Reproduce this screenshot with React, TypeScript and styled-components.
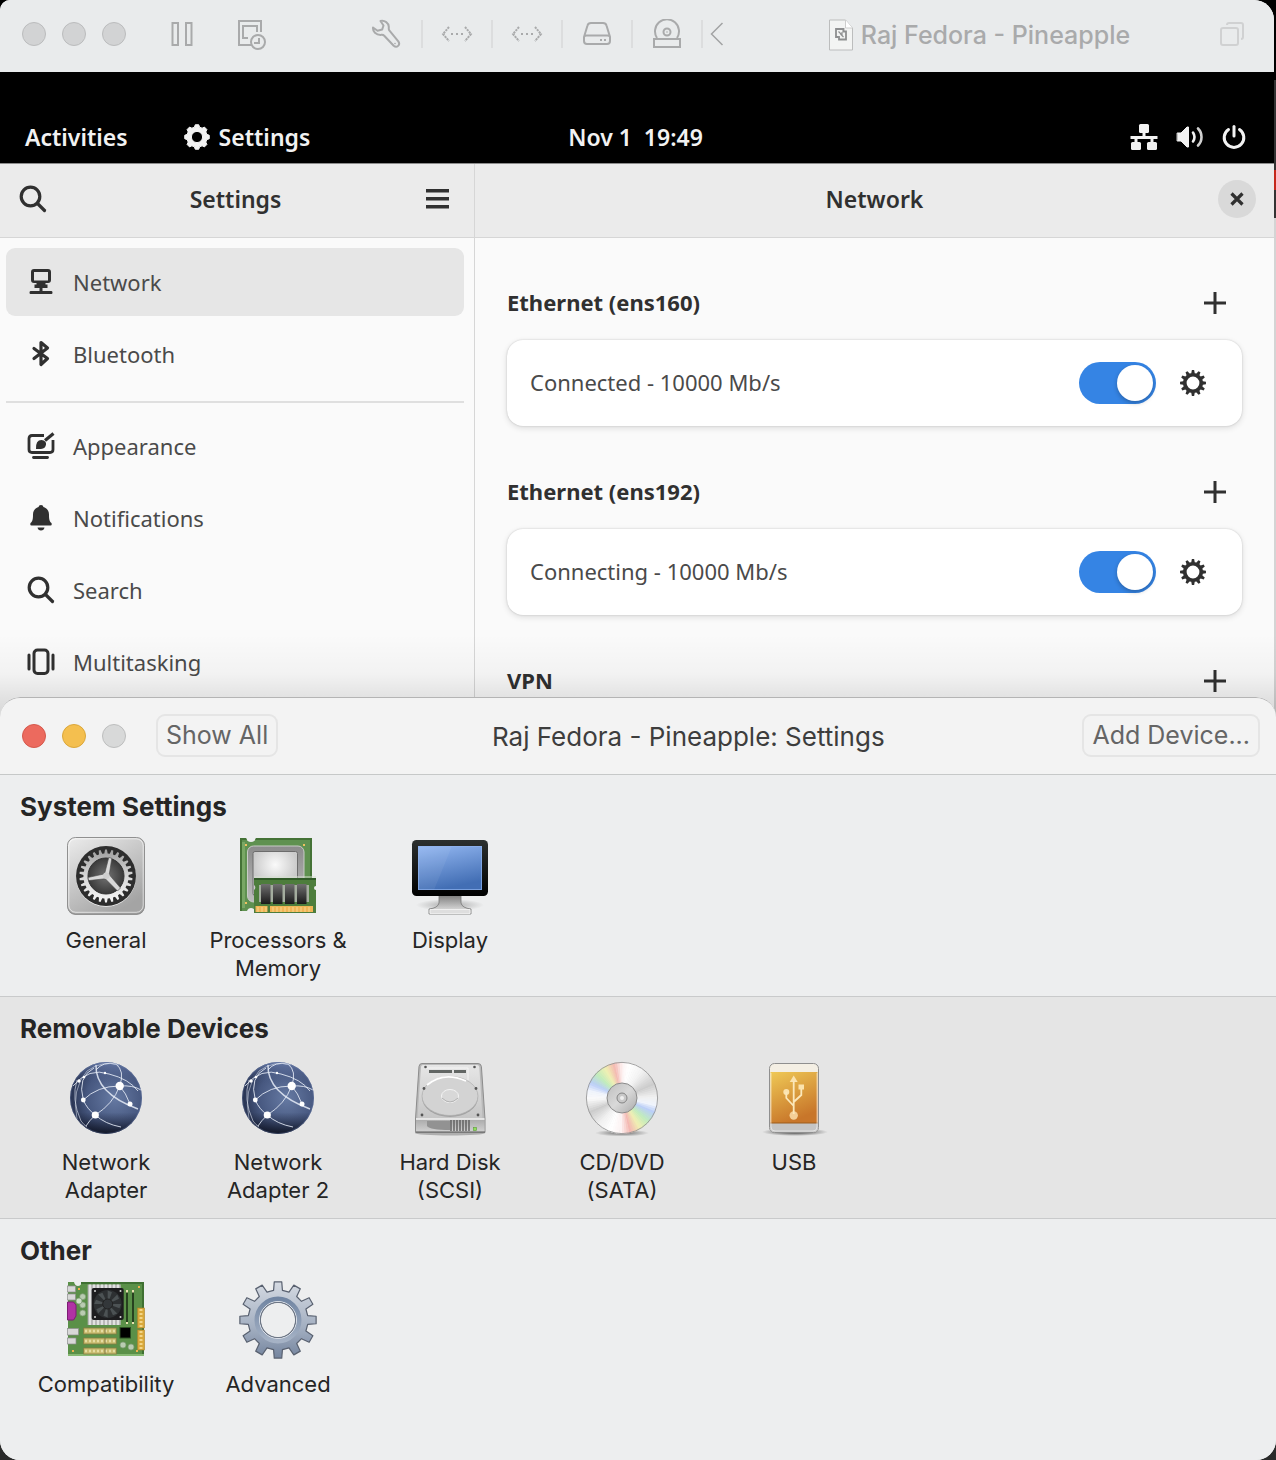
import React, { useState } from "react";
import styled, { createGlobalStyle } from "styled-components";

const GNOME = `"Noto Sans", "Open Sans", sans-serif`;
const MAC = `Inter, "Liberation Sans", sans-serif`;

const GlobalStyle = createGlobalStyle`
  *, *::before, *::after { box-sizing: border-box; }
  body { margin: 0; background: #1c1c1c; }
  button { font: inherit; color: inherit; background: none; border: 0; padding: 0; margin: 0; cursor: pointer; }
  h1, h2, h3 { margin: 0; font-size: inherit; font-weight: inherit; }
  svg { display: block; flex: none; }
`;

/* ---------- geometry helpers ---------- */

const polar = (cx: number, cy: number, r: number, deg: number) => {
  const a = ((deg - 90) * Math.PI) / 180;
  return `${(cx + r * Math.cos(a)).toFixed(2)},${(cy + r * Math.sin(a)).toFixed(2)}`;
};

/** Closed outline of a cog; base and tip are the half widths of a tooth in degrees. */
const cog = (c: number, teeth: number, root: number, tip: number, baseHalf: number, tipHalf: number) => {
  const pts: string[] = [];
  for (let i = 0; i < teeth; i++) {
    const a = (360 / teeth) * i;
    pts.push(polar(c, c, root, a - baseHalf), polar(c, c, tip, a - tipHalf), polar(c, c, tip, a + tipHalf), polar(c, c, root, a + baseHalf));
  }
  return `M${pts.join("L")}Z`;
};

const disc = (c: number, r: number) => `M${c - r},${c}a${r},${r} 0 1,0 ${2 * r},0a${r},${r} 0 1,0 ${-2 * r},0Z`;

/* ---------- symbolic icons ---------- */

const PauseIcon = () => (
  <svg width="22" height="26" viewBox="0 0 22 26" fill="none" stroke="#a9aaab" strokeWidth="2">
    <path d="M1.500 2h5.500v22H1.500zM15 2h5.500v22H15z" />
  </svg>
);

const SnapshotIcon = () => (
  <svg width="30" height="32" viewBox="0 0 30 32" fill="none" stroke="#a9aaab" strokeWidth="2">
    <path d="M14 27H2V3h22v11" />
    <path d="M11 20H6V8h14v6" />
    <circle cx="21" cy="24" r="7" />
    <path d="M22 20v5h-5" />
  </svg>
);

const WrenchIcon = () => (
  <svg width="30" height="30" viewBox="0 0 30 30" fill="none" stroke="#a9aaab" strokeWidth="2" strokeLinejoin="round">
    <path d="M9.500 2c4-1 8.500 2 8.300 6.200c0 1.500-.3 2.200.5 3.200l9 11c2.500 3.500-1.500 7-4.600 4.400L13 16.500c-.8-.9-1.800-.7-3.200-.6C5 16 1.600 12.500 2 8.500l4.500 3.200l4.700-1.200l1.300-4z" />
    <circle cx="24" cy="24.500" r=".8" fill="#a9aaab" stroke="none" />
  </svg>
);

const NetDotsIcon = () => (
  <svg width="32" height="18" viewBox="0 0 32 18" fill="none" stroke="#a9aaab" strokeWidth="2">
    <path d="M8 2L2 9l6 7M24 2l6 7l-6 7" strokeDasharray="2.200 .8" />
    <path d="M10 9h2M15 9h2M20 9h2" />
  </svg>
);

const DriveIcon = () => (
  <svg width="30" height="26" viewBox="0 0 30 26" fill="none" stroke="#a9aaab" strokeWidth="2">
    <path d="M2 16L5.500 4.500Q6.200 2 9 2h12q2.800 0 3.500 2.500L28 16v4q0 3-3 3H5q-3 0-3-3v-4q.3-1.500 2.500-1.500h21q2.200 0 2.500 1.500" />
    <path d="M18 19h2M22 19h2" />
  </svg>
);

const OpticalIcon = () => (
  <svg width="30" height="30" viewBox="0 0 30 30" fill="none" stroke="#a9aaab" strokeWidth="2">
    <path d="M2 20h26v8H2z" />
    <path d="M5 19a12 12 0 1 1 20 0" />
    <circle cx="15" cy="13" r="3.500" />
    <circle cx="15" cy="13" r=".8" fill="#a9aaab" stroke="none" />
  </svg>
);

const BackIcon = () => (
  <svg width="14" height="26" viewBox="0 0 14 26" fill="none" stroke="#a2a3a4" strokeWidth="1.500">
    <path d="M12.500 2L1.500 13l11 11" />
  </svg>
);

const DocumentIcon = () => (
  <svg width="24" height="32" viewBox="0 0 24 32">
    <path d="M.5 1h16L23.500 9v22H.5z" fill="#f3f4f3" stroke="#bcbdbd" />
    <path d="M16.500 1v8h7" fill="#fff" stroke="#cdcdcd" />
    <g fill="none" stroke="#8e8f90" strokeWidth="1.800">
      <path d="M9.500 18H7V10h7.500v2.500" />
      <path d="M13.500 12.500H17v8H10V17" />
      <path d="M9.500 12.500l3.500 3.500v-3M14.500 18l-3-3" strokeWidth="1.200" />
    </g>
  </svg>
);

const WindowsIcon = () => (
  <svg width="24" height="26" viewBox="0 0 24 26" fill="none" stroke="#d0d1d2" strokeWidth="2">
    <rect x="1" y="7" width="17" height="17" rx="2" />
    <path d="M7 4q0-2 2-2h12q2 0 2 2v12q0 2-2 2" />
  </svg>
);

const SolidCogIcon = () => (
  <svg width="26" height="26" viewBox="0 0 26 26" fill="#f2f2f2">
    <path fillRule="evenodd" strokeLinejoin="round" stroke="#f2f2f2" d={cog(13, 8, 10.2, 12.4, 15, 8) + disc(13, 5.6)} />
  </svg>
);

const OutlineCogIcon = () => (
  <svg width="26" height="26" viewBox="0 0 26 26" fill="#303030">
    <path fillRule="evenodd" d={cog(13, 12, 10, 13, 10, 5) + disc(13, 6.4)} />
  </svg>
);

const WiredIcon = () => (
  <svg width="28" height="28" viewBox="0 0 28 28" fill="#f2f2f2">
    <rect x="9" y="1" width="10" height="9" rx="1.500" />
    <rect x="1" y="19" width="10" height="8" rx="1.500" />
    <rect x="17" y="19" width="10" height="8" rx="1.500" />
    <path d="M12.500 9h3v4H27.500v3H23.500v4h-3v-4h-13v4h-3v-4H.5v-3h12z" />
  </svg>
);

const VolumeIcon = () => (
  <svg width="28" height="26" viewBox="0 0 28 26" fill="none" stroke="#f2f2f2" strokeWidth="2.600" strokeLinecap="round">
    <path d="M1.500 9h3.500L11 3h1.500v20H11L5 17H1.500z" fill="#f2f2f2" strokeWidth="1" strokeLinejoin="round" />
    <path d="M17 8.500q3 4.500 0 9" />
    <path d="M22 4.500q3.500 3.500 3.500 8.500t-3.500 8.500" stroke="#d0d0d0" />
  </svg>
);

const PowerIcon = () => (
  <svg width="24" height="26" viewBox="0 0 24 26" fill="none" stroke="#f2f2f2" strokeWidth="3" strokeLinecap="round">
    <path d="M12 2.500v9.500" />
    <path d="M6.500 5.500a9.800 9.800 0 1 0 11 0" />
  </svg>
);

const SearchIcon = () => (
  <svg width="28" height="28" viewBox="0 0 28 28" fill="none" stroke="#303030" strokeWidth="3.200" strokeLinecap="round">
    <circle cx="11.500" cy="11.500" r="9.300" />
    <path d="M18.500 18.500l7 7" />
  </svg>
);

const MenuIcon = () => (
  <svg width="24" height="20" viewBox="0 0 24 20" fill="#303030">
    <path d="M0 0h23v3.500H0zM0 8h23v3.500H0zM0 16h23v3.500H0z" />
  </svg>
);

const CloseIcon = () => (
  <svg width="14" height="14" viewBox="0 0 14 14" stroke="#303030" strokeWidth="3.200">
    <path d="M1.500 1.500l11 11M12.500 1.500l-11 11" />
  </svg>
);

const PlusIcon = () => (
  <svg width="24" height="24" viewBox="0 0 24 24" stroke="#303030" strokeWidth="3">
    <path d="M12 1v22M1 12h22" />
  </svg>
);

const NetworkIcon = () => (
  <svg width="28" height="28" viewBox="0 0 28 28" fill="#303030">
    <path fillRule="evenodd" d="M7 1h14q3 0 3 3v8q0 3-3 3H7q-3 0-3-3V4q0-3 3-3zM7 4v8.500h14V4z" />
    <path d="M9.500 14h9v2.500h2V20h-5v3h9q1 0 1 1.500t-1 1.500h-21q-1 0-1-1.500t1-1.500h9v-3h-5v-3.500h2z" />
  </svg>
);

const BluetoothIcon = () => (
  <svg width="28" height="28" viewBox="0 0 28 28" fill="none" stroke="#303030" strokeWidth="3.200" strokeLinejoin="round" strokeLinecap="round">
    <path d="M7 8.500L20.500 18.500L14 24.500V2.500L20.500 8L7 18.500" />
  </svg>
);

const AppearanceIcon = () => (
  <svg width="28" height="28" viewBox="0 0 28 28" fill="none" stroke="#303030" strokeWidth="2.800">
    <path d="M17 3.500H5q-3 0-3 3v11q0 3 3 3h18q3 0 3-3V8" />
    <path d="M6.500 25.500h14" strokeLinecap="round" />
    <path d="M9 17Q8.500 8 14.500 8q5 .5 4.500 4.500t-5 4.500z" fill="#303030" stroke="none" />
    <path d="M26.500 1.500l-8.500 7" strokeWidth="3.200" />
  </svg>
);

const BellIcon = () => (
  <svg width="28" height="28" viewBox="0 0 28 28" fill="#303030">
    <path d="M14 1c1.500 0 2.200.9 2.400 2C20 4 22 7 22 10.500c0 5 .5 7 2.500 8.500q.8 2.500-1 2.500h-19q-1.800 0-1-2.500C5.500 17.500 6 15.500 6 10.500C6 7 8 4 11.600 3c.2-1.100.9-2 2.400-2zM10.500 23.500h7q-.5 3-3.500 3t-3.500-3z" />
  </svg>
);

const MultitaskIcon = () => (
  <svg width="28" height="28" viewBox="0 0 28 28" fill="none" stroke="#303030" strokeWidth="3" strokeLinecap="round">
    <rect x="7" y="2" width="14" height="23.500" rx="3.500" />
    <path d="M2 7v14M26 7v14" />
  </svg>
);

/* ---------- device pictures, 78px square ---------- */

const Picture = ({ children }: { children: React.ReactNode }) => (
  <svg width="78" height="78" viewBox="0 0 78 78" aria-hidden="true">
    {children}
  </svg>
);

const GeneralPicture = () => (
  <Picture>
    <defs>
      <linearGradient id="genPlate" x1="0" y1="0" x2=".6" y2="1">
        <stop offset="0" stopColor="#ececec" />
        <stop offset="1" stopColor="#a4a4a4" />
      </linearGradient>
      <linearGradient id="genCog" x1="0" y1="0" x2="0" y2="1">
        <stop offset="0" stopColor="#9d9d9d" />
        <stop offset=".5" stopColor="#d8d8d8" />
        <stop offset="1" stopColor="#f6f6f6" />
      </linearGradient>
      <radialGradient id="genWell">
        <stop offset="0" stopColor="#737373" />
        <stop offset="1" stopColor="#3a3a3a" />
      </radialGradient>
    </defs>
    <rect x=".5" y=".8" width="77" height="77" rx="8" fill="#777" />
    <rect x=".5" y=".5" width="77" height="76.500" rx="8" fill="url(#genPlate)" stroke="#909090" />
    <rect x="1.800" y="1.800" width="74.400" height="73.500" rx="7" fill="none" stroke="#fff" strokeOpacity=".6" />
    <circle cx="39" cy="39.800" r="30" fill="#f4f4f4" />
    <circle cx="39" cy="39" r="30" fill="#2d2d2d" />
    <path d={cog(39, 26, 22.6, 26.6, 4.2, 2)} fill="url(#genCog)" />
    <circle cx="39" cy="39" r="18" fill="url(#genWell)" stroke="#333" />
    <g fill="#d9d9d9" stroke="#4a4a4a" strokeWidth=".6">
      <path d="M37 39L41.800 20.500L44.800 21.300L42 39z" />
      <path d="M39 36.500L21 40.500L21.600 43.600L40.500 41.500z" />
      <path d="M41.500 36.800L53.500 51L50.500 54L37.500 41z" />
    </g>
    <circle cx="39.300" cy="38.800" r="3.200" fill="#cfcfcf" />
  </Picture>
);

const ProcessorPicture = () => (
  <Picture>
    <defs>
      <radialGradient id="cpuLid" cx=".5" cy=".3">
        <stop offset="0" stopColor="#fafafa" />
        <stop offset="1" stopColor="#cacaca" />
      </radialGradient>
      <linearGradient id="cpuRim" x1="0" y1="0" x2="0" y2="1">
        <stop offset="0" stopColor="#8b8b8b" />
        <stop offset="1" stopColor="#bdbdbd" />
      </linearGradient>
      <linearGradient id="ramChip" x1="0" y1="0" x2="0" y2="1">
        <stop offset="0" stopColor="#707070" />
        <stop offset="1" stopColor="#1a1a1a" />
      </linearGradient>
    </defs>
    <path d="M1 1h6q1 4 5 4t5-4h56v73H16q-1-3-4-3t-4 3H1z" fill="#5f9150" />
    <path d="M1 1h6l1 2H3v71H1zM17 1h56v40h-2V3H16z" fill="#447236" />
    <path d="M3 5h3v66H3z" fill="#79a765" />
    <g fill="#f0c060">
      <rect x="6" y="7" width="2" height="2" />
      <rect x="64" y="7" width="2" height="2" />
      <rect x="6" y="65" width="2" height="2" />
    </g>
    <rect x="8.500" y="9" width="56.500" height="56" rx="6" fill="url(#cpuRim)" stroke="#c8ccc6" />
    <rect x="14" y="14.500" width="44.500" height="44" rx="2" fill="url(#cpuLid)" stroke="#6c6c6c" />
    <path d="M15 39h62v2H15z" fill="#d5dfd0" fillOpacity=".5" />
    <path d="M15 41h62v8a2 2 0 0 0 0 4v23H15V53a3 3 0 0 0 0-5z" fill="#4d7d3c" />
    <path d="M15 41h62v2H15z" fill="#315b28" />
    <rect x="20" y="48" width="50" height="17" fill="#a4ad9f" />
    {[0, 1, 2, 3].map((i) => (
      <rect key={i} x={22 + i * 12} y="47" width="9.500" height="20" fill="url(#ramChip)" />
    ))}
    <path d="M16.500 69h12v6h-12zM31 69h43v6H31z" fill="#f0b556" />
    <path d="M19 70v5M23 70v5M27 70v5M34 70v5M38 70v5M42 70v5M46 70v5M50 70v5M54 70v5M58 70v5M62 70v5M66 70v5M70 70v5" stroke="#f9d68e" />
  </Picture>
);

const DisplayPicture = () => (
  <Picture>
    <defs>
      <linearGradient id="scr" x1="0" y1="0" x2=".3" y2="1">
        <stop offset="0" stopColor="#94b8f2" />
        <stop offset="1" stopColor="#426eb4" />
      </linearGradient>
      <linearGradient id="bezel" x1="0" y1="0" x2="0" y2="1">
        <stop offset="0" stopColor="#2c302f" />
        <stop offset="1" stopColor="#000" />
      </linearGradient>
      <linearGradient id="stand" x1="0" y1="0" x2="0" y2="1">
        <stop offset="0" stopColor="#7d7d7d" />
        <stop offset="1" stopColor="#f0f0f0" />
      </linearGradient>
      <radialGradient id="standShade">
        <stop offset="0" stopColor="#888" stopOpacity=".7" />
        <stop offset="1" stopColor="#888" stopOpacity="0" />
      </radialGradient>
    </defs>
    <ellipse cx="39" cy="68" rx="34" ry="6" fill="url(#standShade)" />
    <path d="M28 58h22v8q1 5 10 6v5H18v-5q9-1 10-6z" fill="url(#stand)" stroke="#777" strokeWidth=".8" />
    <path d="M19 72.500h40v4H19z" fill="#dedede" stroke="#fff" strokeWidth=".6" />
    <rect x="1" y="3" width="76" height="56" rx="4.500" fill="url(#bezel)" />
    <rect x="7" y="9" width="64" height="44" fill="url(#scr)" />
    <path d="M7 9h34L23 53H7z" fill="#fff" fillOpacity=".06" />
    <rect x="7.500" y="9.500" width="63" height="43" fill="none" stroke="#8fb2ee" strokeOpacity=".7" />
  </Picture>
);

const GlobePicture = () => (
  <Picture>
    <defs>
      <radialGradient id="globe" cx=".62" cy=".5" r=".65">
        <stop offset="0" stopColor="#667aa3" />
        <stop offset=".6" stopColor="#475880" />
        <stop offset="1" stopColor="#232d49" />
      </radialGradient>
      <linearGradient id="globeShade" x1="0" y1="0" x2="0" y2="1">
        <stop offset="0" stopColor="#8298cc" stopOpacity=".6" />
        <stop offset=".3" stopColor="#41507a" stopOpacity="0" />
        <stop offset=".7" stopColor="#10162a" stopOpacity="0" />
        <stop offset="1" stopColor="#080b16" stopOpacity=".8" />
      </linearGradient>
    </defs>
    <circle cx="39" cy="39" r="36" fill="url(#globe)" />
    <circle cx="39" cy="39" r="36" fill="url(#globeShade)" />
    <g fill="none" stroke="#e8edf8" strokeWidth="1" strokeOpacity=".85">
      <path d="M16.300 41Q30 27 52.700 27Q66 26 74 31" />
      <path d="M52.700 27Q46 45 28.300 56Q22 62 19 67" />
      <path d="M29 6Q28 34 71 50" strokeWidth="1.500" />
      <path d="M52.700 27Q59 34 63 45" />
      <path d="M52.700 27Q58 12 49 5Q36 2 29 11" />
      <path d="M16.300 41Q10 18 27 9M16.300 41Q20 50 28.300 56Q38 65 54 68" />
      <path d="M6 27Q22 8 42 15Q62 20 71 32" />
      <path d="M10 21Q4 40 14 62Q17 66 20 68" strokeOpacity=".6" />
      <path d="M10 60Q4 30 20 12Q35 1 52 6" strokeOpacity=".5" />
    </g>
    <g fill="#fff">
      <circle cx="52.700" cy="27" r="4.200" />
      <circle cx="28.300" cy="56" r="3.600" />
      <circle cx="16.300" cy="41" r="2.400" />
      <circle cx="63" cy="45" r="2.500" />
      <circle cx="12" cy="22" r="1.700" />
      <circle cx="17" cy="18" r="1.300" />
      <circle cx="38" cy="14" r="1.200" />
    </g>
    <circle cx="39" cy="39" r="35.500" fill="none" stroke="#6b7fb0" strokeOpacity=".35" />
  </Picture>
);

const HardDiskPicture = () => (
  <Picture>
    <defs>
      <linearGradient id="hdTop" x1="0" y1="0" x2="0" y2="1">
        <stop offset="0" stopColor="#e6e6e6" />
        <stop offset="1" stopColor="#c6c6c6" />
      </linearGradient>
      <linearGradient id="hdFront" x1="0" y1="0" x2="0" y2="1">
        <stop offset="0" stopColor="#a9a9a9" />
        <stop offset="1" stopColor="#d0d0d0" />
      </linearGradient>
    </defs>
    <ellipse cx="39" cy="74" rx="35" ry="2.500" fill="#777" fillOpacity=".5" />
    <path d="M11 4.500h56q3 0 3.400 3L74 60v13.500H4.500V60L8 7.500q.4-3 3-3z" fill="#b9b9b9" stroke="#8c8c8c" />
    <path d="M12 6h54q2 0 2.300 2l3.200 51H6.500L10 8q.2-2 2-2z" fill="url(#hdTop)" />
    <path d="M5 60h68.500v12.500H5z" fill="url(#hdFront)" />
    <path d="M5 60h68.500" stroke="#f6f6f6" strokeWidth="1.400" />
    <path d="M5 73h69" stroke="#666" />
    <path d="M15 9h42v12" fill="none" stroke="#f5f5f5" />
    <path d="M18 11h23v3H18zM43 11h12v3H43z" fill="#626664" />
    <ellipse cx="39" cy="38.500" rx="28" ry="19.500" fill="#a2a2a2" />
    <ellipse cx="39" cy="37" rx="28" ry="19.500" fill="#d3d3d3" stroke="#b0b0b0" strokeWidth=".7" />
    <path d="M16 26Q33 12 55 22" fill="none" stroke="#fff" strokeWidth="1.800" />
    <ellipse cx="39" cy="37" rx="8.500" ry="6.500" fill="#d8d8d8" stroke="#f4f4f4" />
    <path d="M31 39q8 8 16 0" fill="none" stroke="#b0b0b0" />
    <g fill="#555">
      <circle cx="14.500" cy="8" r="1.300" />
      <circle cx="63.500" cy="8" r="1.300" />
      <circle cx="13" cy="29.500" r="1.400" />
      <circle cx="65" cy="29.500" r="1.400" />
      <circle cx="11" cy="56" r="1.400" />
      <circle cx="67" cy="56" r="1.400" />
    </g>
    <path d="M16 62h23v9q-20 0-23-4z" fill="#929292" />
    <path d="M40 61v11M43 61v11M46 61v11M49 61v11M52 61v11M55 61v11M58 61v11" stroke="#555" strokeWidth="1.300" />
    <rect x="62.500" y="68.500" width="3" height="3" fill="#8fe05a" stroke="#5c9a3a" strokeWidth=".6" />
  </Picture>
);

type Stop = [number, [number, number, number]];
const DISC_STOPS: Stop[] = [
  [0, [253, 243, 243]],
  [12, [255, 255, 255]],
  [35, [244, 244, 244]],
  [66, [204, 204, 204]],
  [88, [240, 240, 240]],
  [102, [240, 244, 252]],
  [114, [186, 206, 248]],
  [132, [192, 236, 188]],
  [149, [240, 240, 178]],
  [166, [244, 184, 178]],
  [182, [253, 243, 243]],
  [200, [255, 255, 255]],
  [222, [240, 240, 240]],
  [246, [204, 204, 204]],
  [268, [250, 250, 250]],
  [282, [240, 244, 252]],
  [296, [186, 206, 248]],
  [313, [192, 236, 188]],
  [331, [240, 240, 178]],
  [347, [244, 184, 178]],
  [360, [253, 243, 243]],
];
const discColour = (deg: number) => {
  const i = Math.max(1, DISC_STOPS.findIndex((s) => s[0] >= deg));
  const [a, ca] = DISC_STOPS[i - 1];
  const [b, cb] = DISC_STOPS[i];
  const t = (deg - a) / (b - a);
  return `rgb(${ca.map((v, k) => Math.round(v + (cb[k] - v) * t)).join(",")})`;
};

const DiscPicture = () => (
  <Picture>
    <defs>
      <radialGradient id="discShade">
        <stop offset="0" stopColor="#333" stopOpacity=".7" />
        <stop offset="1" stopColor="#333" stopOpacity="0" />
      </radialGradient>
      <linearGradient id="discHub" x1="0" y1="0" x2="1" y2="1">
        <stop offset="0" stopColor="#bdbdbd" />
        <stop offset=".5" stopColor="#d9d9d9" />
        <stop offset="1" stopColor="#a9a9a9" />
      </linearGradient>
    </defs>
    <ellipse cx="39" cy="74" rx="27" ry="3.500" fill="url(#discShade)" />
    {Array.from({ length: 90 }, (_, i) => (
      <path key={i} d={`M39,39L${polar(39, 39, 36, i * 4)}L${polar(39, 39, 36, i * 4 + 4.8)}Z`} fill={discColour(i * 4 + 2)} />
    ))}
    <circle cx="39" cy="39" r="35.600" fill="none" stroke="#969696" strokeWidth=".9" />
    <circle cx="39" cy="39" r="15" fill="url(#discHub)" stroke="#8c8c8c" />
    <circle cx="39" cy="39" r="5" fill="#c8c8c8" stroke="#848484" />
    <circle cx="39" cy="39" r="2" fill="#eee" />
  </Picture>
);

const UsbPicture = () => (
  <Picture>
    <defs>
      <linearGradient id="usbBody" x1="0" y1="0" x2=".4" y2="1">
        <stop offset="0" stopColor="#efc956" />
        <stop offset="1" stopColor="#c8762a" />
      </linearGradient>
      <radialGradient id="usbShade">
        <stop offset="0" stopColor="#222" stopOpacity=".9" />
        <stop offset="1" stopColor="#222" stopOpacity="0" />
      </radialGradient>
    </defs>
    <ellipse cx="40" cy="73" rx="33" ry="4" fill="url(#usbShade)" />
    <rect x="14.500" y="4.500" width="49" height="69" rx="5" fill="#f4efe4" stroke="#8f8f8f" />
    <path d="M15 64h48v5q0 4-4 4H19q-4 0-4-4z" fill="#c5c5c5" />
    <path d="M15.500 13h47v51h-47z" fill="url(#usbBody)" />
    <path d="M15.500 64h47" stroke="#9c5d1c" />
    <path d="M16 14v54q0 4 4 4h38q4 0 4-4V14" fill="none" stroke="#fff" strokeOpacity=".5" />
    <g fill="#fbe3ae" stroke="none">
      <path d="M38.700 16.500l4 6.500h-8z" />
      <circle cx="38.700" cy="56.500" r="4.200" fill="#f4cf98" />
      <circle cx="31.300" cy="33" r="3" />
      <rect x="43.500" y="25.500" width="5.500" height="5" />
    </g>
    <path d="M38.700 22v33M31.300 33v6l7.400 8M46.300 30v6l-7.600 7" fill="none" stroke="#fbe8bb" strokeWidth="1.800" />
  </Picture>
);

const BoardPicture = () => (
  <Picture>
    <path d="M1 1h6q1 4 4 4t4-4h62v74H1z" fill="#5a9048" />
    <path d="M14 1h63v74h-2V3H14z" fill="#3f7032" />
    <path d="M1 73h76v2H1z" fill="#86b872" />
    <rect x="20.700" y="3.500" width="33" height="40.500" fill="#b9b9b9" />
    <path d="M23 3.500V44M27 3.500V44M31 3.500V44M35 3.500V44M39 3.500V44M43 3.500V44M47 3.500V44M51 3.500V44" stroke="#efefef" strokeWidth="1.500" />
    <rect x="24.700" y="7" width="32" height="32" rx="2" fill="#1d1d1f" />
    <circle cx="40.700" cy="23" r="14" fill="#2d3032" />
    {[0, 45, 90, 135, 180, 225, 270, 315].map((a) => (
      <path key={a} d={`M40.700,23L${polar(40.7, 23, 13.5, a)}L${polar(40.7, 23, 12.5, a + 20)}Z`} fill="#4c5254" />
    ))}
    <circle cx="40.700" cy="23" r="5" fill="#33373a" stroke="#222" />
    <g fill="#d7d7d7">
      <circle cx="28" cy="10" r="1" />
      <circle cx="53.500" cy="10" r="1" />
      <circle cx="28" cy="36" r="1" />
      <circle cx="53.500" cy="36" r="1" />
    </g>
    <path d="M60 11v31M66 11v31" stroke="#27411f" strokeWidth="2" />
    <path d="M60 9v2.500M66 9v2.500M60 41v2M66 41v2" stroke="#e9e0b0" strokeWidth="2" />
    <g fill="#d8d8d8" stroke="#8d8d8d" strokeWidth=".7">
      <rect x=".5" y="5" width="8" height="6" />
      <rect x=".5" y="13" width="8" height="6" />
      <rect x=".5" y="47.500" width="11" height="6.500" />
      <rect x=".5" y="57" width="8.500" height="6" />
    </g>
    <path d="M.5 21h6l2.500 3v11l-2.500 4h-6z" fill="#b032a4" stroke="#7d1c74" />
    <g fill="#b9ccb1" stroke="#7d9a72" strokeWidth=".7">
      <circle cx="15.700" cy="15.700" r="3" />
      <circle cx="15.700" cy="24" r="3" />
      <circle cx="15.700" cy="32" r="3" />
      <circle cx="12" cy="20" r="3" fill="#cfe0c8" />
      <circle cx="56" cy="64" r="3" />
      <circle cx="64" cy="66" r="3" />
    </g>
    {[47, 57, 67].map((y) => (
      <g key={y}>
        <rect x="16.700" y={y} width="32.600" height="6" fill="#c9bc70" stroke="#857b40" strokeWidth=".8" />
        <path d={`M18 ${y + 3}h30`} stroke="#e6dca2" strokeWidth="2.500" strokeDasharray="2 2" />
        <path d={`M38 ${y}v6`} stroke="#807741" />
      </g>
    ))}
    {[27, 49].map((y) => (
      <g key={y}>
        <rect x="70.500" y={y} width="7" height="20" fill="#d9a83a" stroke="#ab822a" strokeWidth=".6" />
        <path d={`M74 ${y + 1}v18`} stroke="#f3d588" strokeWidth="3" strokeDasharray="2 2" />
      </g>
    ))}
    <rect x="53" y="46.500" width="10.500" height="10.500" fill="#000" stroke="#2c4f22" />
    <g fill="#f0b050">
      <rect x="11" y="7" width="2" height="2" />
      <rect x="71" y="5" width="2" height="2" />
      <rect x="5" y="69" width="2" height="2" />
      <rect x="69" y="69" width="2" height="2" />
    </g>
  </Picture>
);

const AdvancedPicture = () => (
  <Picture>
    <defs>
      <linearGradient id="advCog" x1="0" y1="0" x2="0" y2="1">
        <stop offset="0" stopColor="#d5dae2" />
        <stop offset=".6" stopColor="#a3afc1" />
        <stop offset="1" stopColor="#74849e" />
      </linearGradient>
      <linearGradient id="advRing" x1="0" y1="0" x2="0" y2="1">
        <stop offset="0" stopColor="#7286a3" />
        <stop offset="1" stopColor="#a5b2c5" />
      </linearGradient>
    </defs>
    <path d={cog(39, 12, 30, 38.3, 8.5, 5.6) + disc(39, 17.8)} fillRule="evenodd" fill="url(#advCog)" stroke="#596170" strokeWidth="1.200" strokeLinejoin="round" />
    <circle cx="39" cy="39" r="21" fill="none" stroke="url(#advRing)" strokeWidth="5" />
    <circle cx="39" cy="39" r="18.500" fill="none" stroke="#dfe4ec" strokeWidth="1" />
    <circle cx="39" cy="39" r="17.600" fill="none" stroke="#6a7484" strokeWidth=".8" />
  </Picture>
);

/* ---------- virtual machine window ---------- */

const Desktop = styled.div`
  display: flex;
  flex-direction: column;
  min-height: 100vh;
  background: linear-gradient(#000 0 80px, #333 80px 170px, #c5281c 170px 190px, #333 190px 218px, #d4d4d4 218px 760px, #2a2a2a 760px);
`;

const VmWindow = styled.section`
  margin-right: 2px;
  border-radius: 10px 20px 0 0;
  overflow: hidden;
  background: #fafafa;
`;

const VmToolbar = styled.header`
  display: flex;
  align-items: center;
  height: 72px;
  padding: 0 30px 4px 22px;
  background: #e9ebec;
  color: #a9aaab;
`;

const Lights = styled.div`
  display: flex;
  gap: 16px;
`;

const Light = styled.button<{ $fill: string; $edge: string }>`
  width: 24px;
  height: 24px;
  border-radius: 50%;
  background: ${(p) => p.$fill};
  border: 1px solid ${(p) => p.$edge};
`;

const PlayTools = styled.div`
  display: flex;
  align-items: center;
  gap: 44px;
  margin: 0 84px 0 45px;
`;

const DeviceTools = styled.div`
  display: flex;
`;

const ToolCell = styled.button<{ $first?: boolean; $last?: boolean }>`
  display: flex;
  align-items: center;
  justify-content: ${(p) => (p.$last ? "flex-start" : "center")};
  width: ${(p) => (p.$last ? 38 : 70)}px;
  height: 28px;
  padding-left: ${(p) => (p.$last ? 7 : 0)}px;
  border-left: ${(p) => (p.$first ? 0 : 2)}px solid #dcddde;
`;

const VmTitle = styled.h1`
  flex: 1;
  display: flex;
  align-items: center;
  justify-content: center;
  gap: 8px;
  padding-top: 2px;
  font: 500 25px/32px ${MAC};
  white-space: nowrap;
`;

const TopBar = styled.div`
  display: grid;
  grid-template-columns: 1fr auto 1fr;
  align-items: center;
  height: 92px;
  padding: 38px 28px 0 25px;
  background: #000;
  border-bottom: 1px solid #8c8c8c;
  color: #f2f2f2;
  font: 600 23px/32px ${GNOME};
`;

const TopLeft = styled.div`
  display: flex;
  gap: 56px;
`;

const TopButton = styled.button`
  display: flex;
  align-items: center;
  gap: 9px;
`;

const Clock = styled.button`
  white-space: pre;
`;

const Tray = styled.button`
  justify-self: end;
  display: flex;
  align-items: center;
  gap: 18px;
`;

const Panes = styled.div`
  display: grid;
  grid-template-columns: 475px minmax(0, 1fr);
`;

const Pane = styled.div<{ $edge?: boolean }>`
  border-right: ${(p) => (p.$edge ? 1 : 0)}px solid #d6d6d6;
`;

const PaneHeader = styled.div<{ $side: number; $pad: string }>`
  display: grid;
  grid-template-columns: ${(p) => p.$side}px 1fr ${(p) => p.$side}px;
  align-items: center;
  justify-items: center;
  height: 74px;
  padding: ${(p) => p.$pad};
  background: #ebebeb;
  border-bottom: 1px solid #d6d6d6;
  color: #303030;
  font: 600 23px/32px ${GNOME};
  & > h2 { grid-column: 2; }
`;

const RoundButton = styled.button`
  display: grid;
  place-items: center;
  width: 38px;
  height: 38px;
  border-radius: 50%;
  background: #d9d9d9;
`;

const SideNav = styled.nav`
  display: flex;
  flex-direction: column;
  gap: 4px;
  padding: 10px 10px 18px 6px;
`;

const NavItem = styled.button<{ $active: boolean }>`
  display: flex;
  align-items: center;
  gap: 18px;
  height: 68px;
  padding-left: 21px;
  border-radius: 9px;
  background: ${(p) => (p.$active ? "#e6e6e6" : "transparent")};
  color: #4a4a4a;
  font: 400 22px/32px ${GNOME};
`;

const NavRule = styled.hr`
  width: 100%;
  height: 2px;
  margin: 9px 0 5px;
  border: 0;
  background: #dfdfdf;
`;

const Content = styled.div`
  display: flex;
  flex-direction: column;
  gap: 44px;
  padding: 43px 32px 0;
`;

const Group = styled.section`
  display: flex;
  flex-direction: column;
  gap: 15px;
`;

const GroupHeader = styled.div`
  display: flex;
  align-items: center;
  justify-content: space-between;
  height: 44px;
  padding-right: 15px;
  color: #303030;
  font: 700 22px/32px ${GNOME};
  & > h3 { padding-bottom: 2px; }
`;

const Card = styled.div`
  display: flex;
  align-items: center;
  height: 86px;
  padding: 0 36px 0 23px;
  border-radius: 16px;
  background: #fff;
  box-shadow: 0 0 2px rgba(0, 0, 0, 0.18), 0 2px 6px rgba(0, 0, 0, 0.12);
  color: #4a4a4a;
  font: 400 22px/32px ${GNOME};
`;

const CardLabel = styled.label`
  flex: 1;
  padding-bottom: 2px;
`;

const Toggle = styled.input`
  appearance: none;
  display: flex;
  align-items: center;
  justify-content: flex-start;
  width: 77px;
  height: 42px;
  margin: 0 24px 0 0;
  padding: 3px;
  border-radius: 21px;
  background: #c8c8c8;
  cursor: pointer;
  &::before {
    content: "";
    width: 36px;
    height: 36px;
    border-radius: 50%;
    background: #fff;
    box-shadow: 0 2px 4px rgba(0, 0, 0, 0.25);
  }
  &:checked {
    justify-content: flex-end;
    background: #3584e4;
  }
`;

/* ---------- settings window ---------- */

const SettingsWindow = styled.section`
  position: relative;
  flex: 1;
  display: flex;
  flex-direction: column;
  margin-top: -17px;
  border-radius: 20px;
  overflow: hidden;
  background: #edeeef;
  color: #252525;
  font-family: ${MAC};
`;

const Shade = styled.div`
  position: relative;
  height: 80px;
  margin-top: -80px;
  background: linear-gradient(rgba(0, 0, 0, 0), rgba(0, 0, 0, 0.03) 50%, rgba(0, 0, 0, 0.14));
  pointer-events: none;
`;

const TitleBar = styled.header`
  display: flex;
  align-items: center;
  height: 78px;
  padding: 0 16px 1px 22px;
  background: #f3f3f3;
  border: solid #c6c8c8;
  border-width: 1px 0;
  border-top-color: #b4b4b4;
  border-radius: 20px 20px 0 0;
`;

const BarButton = styled.button<{ $gap?: boolean }>`
  height: 43px;
  margin-left: ${(p) => (p.$gap ? 30 : 0)}px;
  padding: 0 8px 2px;
  border: 2px solid #e5e5e5;
  border-radius: 9px;
  color: #656565;
  font: 400 25px/32px ${MAC};
  white-space: nowrap;
`;

const BarTitle = styled.h1`
  flex: 1;
  padding: 2px 0 0 16px;
  color: #3d3d3d;
  font: 400 26px/32px ${MAC};
  text-align: center;
`;

const Section = styled.section<{ $shaded?: boolean; $grow?: boolean }>`
  flex: ${(p) => (p.$grow ? 1 : "none")};
  padding: 16px 20px 14px;
  background: ${(p) => (p.$shaded ? "#e5e5e5" : "#edeeef")};
  border-bottom: ${(p) => (p.$grow ? 0 : 1)}px solid #c9cacb;
`;

const SectionTitle = styled.h2`
  font: 700 26px/32px ${MAC};
`;

const DeviceRow = styled.div`
  display: flex;
  flex-wrap: wrap;
  margin-top: 14px;
`;

const Device = styled.button`
  display: flex;
  flex-direction: column;
  align-items: center;
  gap: 11px;
  width: 172px;
  min-height: 145px;
  font: 400 22px/28px ${MAC};
`;

const DeviceName = styled.span`
  max-width: 150px;
`;

/* ---------- page ---------- */

const NAV = [
  { name: "Network", icon: <NetworkIcon /> },
  { name: "Bluetooth", icon: <BluetoothIcon />, rule: true },
  { name: "Appearance", icon: <AppearanceIcon /> },
  { name: "Notifications", icon: <BellIcon /> },
  { name: "Search", icon: <SearchIcon /> },
  { name: "Multitasking", icon: <MultitaskIcon /> },
];

const ADAPTERS = [
  { id: "ens160", status: "Connected - 10000 Mb/s" },
  { id: "ens192", status: "Connecting - 10000 Mb/s" },
];

const SECTIONS = [
  {
    title: "System Settings",
    items: [
      { name: "General", art: <GeneralPicture /> },
      { name: "Processors & Memory", art: <ProcessorPicture /> },
      { name: "Display", art: <DisplayPicture /> },
    ],
  },
  {
    title: "Removable Devices",
    items: [
      { name: "Network Adapter", art: <GlobePicture /> },
      { name: "Network Adapter 2", art: <GlobePicture /> },
      { name: "Hard Disk (SCSI)", art: <HardDiskPicture /> },
      { name: "CD/DVD (SATA)", art: <DiscPicture /> },
      { name: "USB", art: <UsbPicture /> },
    ],
  },
  {
    title: "Other",
    items: [
      { name: "Compatibility", art: <BoardPicture /> },
      { name: "Advanced", art: <AdvancedPicture /> },
    ],
  },
];

function AdapterGroup({ id, status }: { id: string; status: string }) {
  const [on, setOn] = useState(true);
  return (
    <Group>
      <GroupHeader>
        <h3>Ethernet ({id})</h3>
        <button aria-label="Add profile"><PlusIcon /></button>
      </GroupHeader>
      <Card>
        <CardLabel htmlFor={id}>{status}</CardLabel>
        <Toggle id={id} type="checkbox" checked={on} onChange={(e) => setOn(e.target.checked)} />
        <button aria-label="Options"><OutlineCogIcon /></button>
      </Card>
    </Group>
  );
}

export default function App() {
  const [page, setPage] = useState("Network");
  return (
    <Desktop>
      <GlobalStyle />
      <VmWindow>
        <VmToolbar>
          <Lights>
            <Light $fill="#d2d3d4" $edge="#bbbcbd" aria-label="Close" />
            <Light $fill="#d2d3d4" $edge="#bbbcbd" aria-label="Minimise" />
            <Light $fill="#d2d3d4" $edge="#bbbcbd" aria-label="Zoom" />
          </Lights>
          <PlayTools>
            <button aria-label="Pause"><PauseIcon /></button>
            <button aria-label="Snapshots"><SnapshotIcon /></button>
          </PlayTools>
          <DeviceTools>
            <ToolCell $first aria-label="Settings"><WrenchIcon /></ToolCell>
            <ToolCell aria-label="Network adapter"><NetDotsIcon /></ToolCell>
            <ToolCell aria-label="Network adapter 2"><NetDotsIcon /></ToolCell>
            <ToolCell aria-label="Hard disk"><DriveIcon /></ToolCell>
            <ToolCell aria-label="CD/DVD"><OpticalIcon /></ToolCell>
            <ToolCell $last aria-label="Collapse"><BackIcon /></ToolCell>
          </DeviceTools>
          <VmTitle>
            <DocumentIcon />
            Raj Fedora - Pineapple
          </VmTitle>
          <button aria-label="Windows"><WindowsIcon /></button>
        </VmToolbar>
        <TopBar>
          <TopLeft>
            <TopButton>Activities</TopButton>
            <TopButton><SolidCogIcon />Settings</TopButton>
          </TopLeft>
          <Clock>{"Nov 1  19:49"}</Clock>
          <Tray aria-label="System menu">
            <WiredIcon />
            <VolumeIcon />
            <PowerIcon />
          </Tray>
        </TopBar>
        <Panes>
          <Pane $edge>
            <PaneHeader $side={28} $pad="0 22px 3px 19px">
              <button aria-label="Search"><SearchIcon /></button>
              <h2>Settings</h2>
              <button aria-label="Menu"><MenuIcon /></button>
            </PaneHeader>
            <SideNav>
              {NAV.map((n) => (
                <React.Fragment key={n.name}>
                  <NavItem $active={page === n.name} onClick={() => setPage(n.name)}>
                    {n.icon}
                    {n.name}
                  </NavItem>
                  {n.rule && <NavRule />}
                </React.Fragment>
              ))}
            </SideNav>
          </Pane>
          <Pane>
            <PaneHeader $side={38} $pad="0 18px 3px">
              <h2>Network</h2>
              <RoundButton aria-label="Close"><CloseIcon /></RoundButton>
            </PaneHeader>
            <Content>
              {ADAPTERS.map((a) => (
                <AdapterGroup key={a.id} {...a} />
              ))}
              <GroupHeader>
                <h3>VPN</h3>
                <button aria-label="Add VPN"><PlusIcon /></button>
              </GroupHeader>
            </Content>
          </Pane>
        </Panes>
      </VmWindow>
      <Shade />
      <SettingsWindow>
        <TitleBar>
          <Lights>
            <Light $fill="#ec6a5e" $edge="#d5584c" aria-label="Close" />
            <Light $fill="#f4bf4f" $edge="#dba73a" aria-label="Minimise" />
            <Light $fill="#d8d9d9" $edge="#bdbebe" aria-label="Zoom" />
          </Lights>
          <BarButton $gap>Show All</BarButton>
          <BarTitle>Raj Fedora - Pineapple: Settings</BarTitle>
          <BarButton>Add Device...</BarButton>
        </TitleBar>
        {SECTIONS.map((s, i) => (
          <Section key={s.title} $shaded={i === 1} $grow={i === 2}>
            <SectionTitle>{s.title}</SectionTitle>
            <DeviceRow>
              {s.items.map((d) => (
                <Device key={d.name}>
                  {d.art}
                  <DeviceName>{d.name}</DeviceName>
                </Device>
              ))}
            </DeviceRow>
          </Section>
        ))}
      </SettingsWindow>
    </Desktop>
  );
}
